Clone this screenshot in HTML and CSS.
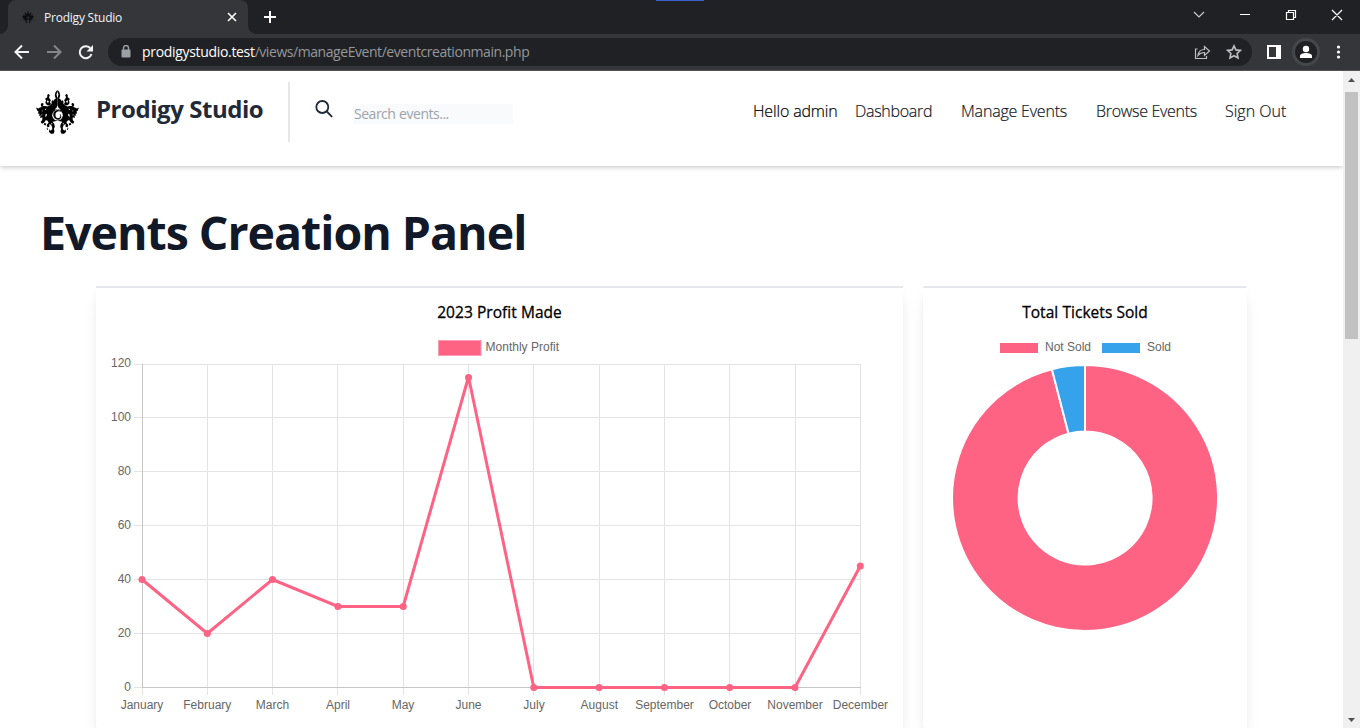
FILE: index.html
```html
<!DOCTYPE html>
<html lang="en">
<head>
<meta charset="utf-8">
<title>Prodigy Studio</title>
<link rel="stylesheet" href="styles.css">
</head>
<body>
<svg class="defs" width="0" height="0">
  <symbol id="crest" viewBox="48 45 130 133">
    <g id="crest-half">
      <path d="M113 45C107 49 105 56 105 63L108 71C100 74 102 80 97 83C92 92 86 96 78 94C70 92 60 99 55 101L48 98L52 108L56 111L53 116L59 117L56 123L62 122L60 130L67 127L67 136L62 142L66 147L73 143L78 136L84 139L86 144L80 151L83 158L89 155L88 148L94 151L97 158L97 164L92 168L89 164L87 171L93 177L101 177L104 170L102 163L105 156L103 147L98 141L113 138Z"/>
      <path d="M87 92C78 91 74 83 79 76L75 72L82 67L82 59L87 57L90 62L87 66L89 71L93 76L90 81L94 88Z"/>
      <path d="M64 95C61 89 63 84 68 84L72 88L68 90L74 97ZM73 145L79 146L77 152L71 149ZM94 82L98 75L101 80L98 86ZM80 160L85 162L82 167Z"/>
      <path class="cut" d="M83 76L87 79L84 85L81 80ZM76 120L80 116L81 121L77 127ZM64 119L68 119L66 123ZM94 144L98 147L95 150ZM75 103L80 101L77 106ZM65 108L68 106L67 111Z"/>
    </g>
    <use href="#crest-half" transform="translate(226 0) scale(-1 1)"/>
    <path class="cut" d="M113 51L116 58L114 67H112L110 58ZM113 91L116 99L123 104H104L110 99Z"/>
    <circle class="cut" cx="113" cy="121" r="16"/>
    <path d="M101 114C106 103 119 103 125 112C117 107 109 110 107 117C105 128 112 134 120 128C123 125 122 120 118 117C127 119 126 130 119 134C108 138 97 127 101 114Z"/>
  </symbol>
</svg>

<div class="tabstrip">
  <span class="accent"></span>
  <div class="tab">
    <svg class="favicon" viewBox="0 0 130 133"><use href="#crest" width="130" height="133"/></svg>
    <span class="tab-title">Prodigy Studio</span>
    <svg class="tab-close" width="10" height="10" viewBox="0 0 10 10"><path d="M1 1l8 8M9 1l-8 8"/></svg>
  </div>
  <svg class="new-tab" width="12" height="12" viewBox="0 0 12 12"><path d="M6 0v12M0 6h12"/></svg>
  <svg class="window-buttons" width="150" height="16" viewBox="0 0 150 16">
    <path class="dim" d="M4 5l5 5 5-5"/>
    <path d="M50 7.500h10M96.500 5.500h7v7h-7zM98.500 5V3.500h7v7h-2M142 3l10 10M152 3l-10 10"/>
  </svg>
</div>

<div class="toolbar">
  <svg class="nav-icons" width="80" height="18" viewBox="0 0 80 18">
    <path d="M16 9H3M9 2.500L2.500 9 9 15.500"/>
    <path class="disabled" d="M34 9h13M41 2.500L47.500 9 41 15.500"/>
    <path d="M77.700 5.800A6 6 0 1 0 78.500 11"/>
    <path class="solid" d="M80 2v6.500h-6.500z"/>
  </svg>
  <div class="omnibox">
    <svg class="lock" width="10" height="13" viewBox="0 0 10 13"><rect x="0.500" y="4.500" width="9" height="8" rx="1"/><path d="M2.500 5V3a2.500 2.500 0 0 1 5 0v2"/></svg>
    <span class="url"><b>prodigystudio.test</b><i>/views/manageEvent/eventcreationmain.php</i></span>
    <svg class="box-icons" width="48" height="18" viewBox="0 0 48 18">
      <path d="M3.500 6H1.500v9.500h11V13M4 12.500c.5-4 3-6 6.500-6V3.500l5 4.500-5 4.500v-3C7.500 9.500 5.500 10.500 4 12.500z"/>
      <path class="star" d="M40 2.800l1.900 4.100 4.500.5-3.300 3.100.9 4.400-4-2.200-4 2.200.9-4.400-3.300-3.100 4.500-.5z"/>
    </svg>
  </div>
  <svg class="tool-icons" width="92" height="28" viewBox="0 0 92 28">
    <path class="panel" fill-rule="evenodd" d="M7 7h14v14H7zM9 9v10h7V9z"/>
    <circle class="ring" cx="46" cy="14" r="12.500"/>
    <circle cx="46" cy="11" r="3.200"/><path d="M40 20v-2c0-4 12-4 12 0v2z"/>
    <circle cx="78.500" cy="9" r="1.600"/><circle cx="78.500" cy="14" r="1.600"/><circle cx="78.500" cy="19" r="1.600"/>
  </svg>
</div>

<div class="viewport">
  <div class="page">
    <header class="site-header">
      <svg class="logo" viewBox="0 0 130 133"><use href="#crest" width="130" height="133"/></svg>
      <span class="brand">Prodigy Studio</span>
      <span class="divider"></span>
      <svg class="search-icon" width="18" height="18" viewBox="0 0 18 18"><circle cx="7.300" cy="7" r="6"/><path d="M11.800 11.500l5.300 5.300"/></svg>
      <div class="search">Search events...</div>
      <nav class="menu">
        <span class="hello">Hello admin</span>
        <a class="dash">Dashboard</a><a class="manage">Manage Events</a><a class="browse">Browse Events</a><a class="out">Sign Out</a>
      </nav>
    </header>
    <h1>Events Creation Panel</h1>
    <main class="cards">
      <section class="card profit">
        <h2>2023 Profit Made</h2>
        <svg class="chart" width="807" height="398" viewBox="96 331 807 398">
          <rect class="swatch" x="438.500" y="340.500" width="42.500" height="15"/>
          <text x="485.500" y="351" textLength="73.500">Monthly Profit</text>
          <path class="grid" d="M134 364.500H861M134 417.500H861M134 471.500H861M134 525.500H861M134 579.500H861M134 633.500H861M134 687.500H142M207.500 364V695M272.500 364V695M337.500 364V695M403.500 364V695M468.500 364V695M533.500 364V695M599.500 364V695M664.500 364V695M729.500 364V695M795.500 364V695M860.500 364V695M142.500 688V695"/>
          <path class="axis" d="M142.500 364V688M142 687.500H861"/>
          <g class="ylabels">
            <text x="131" y="367">120</text><text x="131" y="421">100</text><text x="131" y="475">80</text><text x="131" y="529">60</text><text x="131" y="583">40</text><text x="131" y="637">20</text><text x="131" y="691">0</text>
          </g>
          <g class="xlabels">
            <text x="142" y="709">January</text><text x="207.300" y="709">February</text><text x="272.500" y="709">March</text><text x="338" y="709">April</text><text x="403" y="709">May</text><text x="468.500" y="709">June</text><text x="534" y="709">July</text><text x="599.300" y="709">August</text><text x="664.500" y="709">September</text><text x="730" y="709">October</text><text x="795" y="709">November</text><text x="860.400" y="709">December</text>
          </g>
          <polyline class="line" points="142,579.500 207.300,633.500 272.500,579.500 337.900,606.500 403.200,606.500 468.500,377 533.800,687.500 599.100,687.500 664.400,687.500 729.700,687.500 795,687.500 860.300,566"/>
          <g class="dots">
            <circle cx="142" cy="579.500" r="3.500"/><circle cx="207.300" cy="633.500" r="3.500"/><circle cx="272.500" cy="579.500" r="3.500"/><circle cx="337.900" cy="606.500" r="3.500"/><circle cx="403.200" cy="606.500" r="3.500"/><circle cx="468.500" cy="377.500" r="3.500"/><circle cx="533.800" cy="687.500" r="3.500"/><circle cx="599.100" cy="687.500" r="3.500"/><circle cx="664.400" cy="687.500" r="3.500"/><circle cx="729.700" cy="687.500" r="3.500"/><circle cx="795" cy="687.500" r="3.500"/><circle cx="860.300" cy="566" r="3.500"/>
          </g>
        </svg>
      </section>
      <section class="card tickets">
        <h2>Total Tickets Sold</h2>
        <svg class="chart" width="324" height="398" viewBox="923 331 324 398">
          <rect class="pink" x="1000" y="343" width="38" height="10"/>
          <text x="1045" y="351" textLength="46">Not Sold</text>
          <rect class="blue" x="1102" y="343" width="38" height="10"/>
          <text x="1147" y="351" textLength="24">Sold</text>
          <path class="pink slice" d="M1085 365A133 133 0 1 1 1051.900 369.200L1068.500 433.600A66.500 66.500 0 1 0 1085 431.500z"/>
          <path class="blue slice" d="M1051.900 369.200A133 133 0 0 1 1085 365V431.500A66.500 66.500 0 0 0 1068.500 433.600z"/>
        </svg>
      </section>
    </main>
  </div>
  <div class="scrollbar">
    <svg width="7" height="4" viewBox="0 0 7 4"><path d="M0 4L3.500 0 7 4z"/></svg>
    <span class="thumb"></span>
    <svg class="down" width="7" height="4" viewBox="0 0 7 4"><path d="M0 0h7L3.500 4z"/></svg>
  </div>
</div>
</body>
</html>
```

FILE: styles.css
```css
* { box-sizing: border-box; }
body { margin: 0; width: 1360px; height: 728px; overflow: hidden; background: #fff; font-family: "Open Sans", "Noto Sans", sans-serif; }
svg { display: block; flex: none; }
.defs { position: absolute; }
.cut { fill: #fff; }

.tabstrip { position: relative; display: flex; align-items: center; height: 34px; padding-left: 8px; background: #202124; }
.accent { position: absolute; left: 656px; top: 0; width: 48px; height: 1px; background: #3b63cc; }
.tab { position: relative; display: flex; align-items: center; width: 240px; height: 34px; padding: 0 11px 0 14px; border-radius: 8px 8px 0 0; background: #35363a; }
.tab::before, .tab::after { content: ""; position: absolute; bottom: 0; width: 8px; height: 8px; }
.tab::before { left: -8px; background: radial-gradient(circle at 0 0, #202124 7.5px, #35363a 8px); }
.tab::after { right: -8px; background: radial-gradient(circle at 100% 0, #202124 7.5px, #35363a 8px); }
.favicon { width: 12px; height: 12px; opacity: .8; }
.favicon { --cut: #35363a; }
.cut { fill: var(--cut, #fff); }
.tab-title { flex: 1; margin-left: 10px; font-size: 12px; letter-spacing: -0.22px; color: #f1f3f4; }
.tab-close, .new-tab { fill: none; stroke: #fff; stroke-width: 1.6; }
.new-tab { margin-left: 16px; stroke-width: 2; }
.window-buttons { margin: -5px 20px 0 auto; fill: none; stroke: #fff; stroke-width: 1.2; overflow: visible; }
.window-buttons .dim { stroke: #ccc; }

.toolbar { display: flex; align-items: center; height: 37px; padding: 0 8px 1px 13px; background: #35363a; border-bottom: 1px solid #55535a; }
.nav-icons { fill: none; stroke: #f1f3f4; stroke-width: 2; }
.nav-icons .disabled { stroke: #85868a; }
.nav-icons .solid { fill: #f1f3f4; stroke: none; }
.omnibox { display: flex; align-items: center; width: 1144px; height: 28px; margin-left: 15px; padding: 0 10px 0 13px; border-radius: 14px; background: #202124; }
.lock { fill: #9aa0a6; stroke: none; }
.lock path { fill: none; stroke: #9aa0a6; stroke-width: 1.4; }
.url { flex: 1; margin-left: 11px; font-size: 14px; line-height: 20px; white-space: nowrap; color: #94989d; }
.url b { font-weight: 400; color: #fff; letter-spacing: -0.32px; }
.url i { font-style: normal; letter-spacing: -0.44px; }
.box-icons { fill: none; stroke: #bdc1c6; stroke-width: 1.2; }
.box-icons .star { stroke-width: 1.6; }
.tool-icons { margin-left: 8px; fill: #fff; }
.tool-icons .ring { fill: #202124; stroke: #46474b; stroke-width: 3; }

.viewport { display: flex; height: 657px; }
.page { width: 1343px; overflow: hidden; }
.site-header { display: flex; height: 95px; padding-left: 36px; background: #fff; box-shadow: 0 1px 5px rgba(0,0,0,.24); }
.logo { width: 43px; height: 44px; margin-top: 19px; }
.brand { width: 192px; margin: 20px 0 0 17px; font-size: 24px; line-height: 36px; font-weight: 700; letter-spacing: -0.45px; color: #1f2937; white-space: nowrap; }
.divider { width: 2px; height: 60px; margin-top: 11px; background: #e5e7eb; }
.search-icon { margin: 29px 0 0 25px; fill: none; stroke: #1f2937; stroke-width: 1.8; }
.search { width: 160px; height: 20px; margin: 33px 0 0 20px; padding-left: 1px; background: #f9fafb; color: #9ca3af; font-size: 14px; line-height: 20px; letter-spacing: -0.48px; word-spacing: 0.5px; white-space: nowrap; }
.menu { display: flex; height: 24px; margin: 28px 0 0 240px; font-size: 16px; line-height: 24px; font-weight: 300; letter-spacing: -0.3px; color: #111827; white-space: nowrap; -webkit-text-stroke: 0.2px; }
.hello { width: 102px; color: #000; letter-spacing: -0.15px; }
.dash { width: 106px; }
.manage { width: 135px; letter-spacing: -0.2px; }
.browse { width: 129px; }
.out { letter-spacing: 0; }
h1 { margin: 30px 0 0 40px; font-size: 46.5px; line-height: 72px; font-weight: 700; letter-spacing: -1.01px; color: #111827; white-space: nowrap; }
.cards { display: flex; gap: 20px; padding: 18px 96px 0; }
.card { height: 443px; border-top: 2px solid #e5e7eb; border-radius: 2px 2px 4px 4px; background: #fff; box-shadow: 0 10px 15px -3px rgba(0,0,0,.1), 0 4px 6px -2px rgba(0,0,0,.05); }
.profit { width: 807px; border-radius: 0 0 4px 4px; }
.tickets { width: 324px; }
.card h2 { height: 43px; margin: 0; padding-top: 12px; font-size: 15.5px; line-height: 24px; font-weight: 500; letter-spacing: 0.05px; text-align: center; color: #000; -webkit-text-stroke: 0.3px; }
.chart { font-family: "Liberation Sans", Arial, sans-serif; font-size: 12px; fill: #666; }
.ylabels { text-anchor: end; }
.xlabels { text-anchor: middle; }
.grid { stroke: #e3e3e3; fill: none; }
.axis { stroke: #c6c6c6; fill: none; }
.line { stroke: #ff6384; stroke-width: 3; fill: none; }
.dots, .pink { fill: #ff6384; }
.swatch { fill: #ff6384; stroke: #ff9bb0; }
.blue { fill: #36a2eb; }
.slice { stroke: #fff; stroke-width: 2; }
.scrollbar { display: flex; flex-direction: column; align-items: center; width: 17px; padding: 7px 0 6px; background: #f0f0f0; fill: #505050; }
.thumb { width: 13px; height: 247px; margin-top: 10px; background: #c1c1c1; }
.down { margin-top: auto; }
```
